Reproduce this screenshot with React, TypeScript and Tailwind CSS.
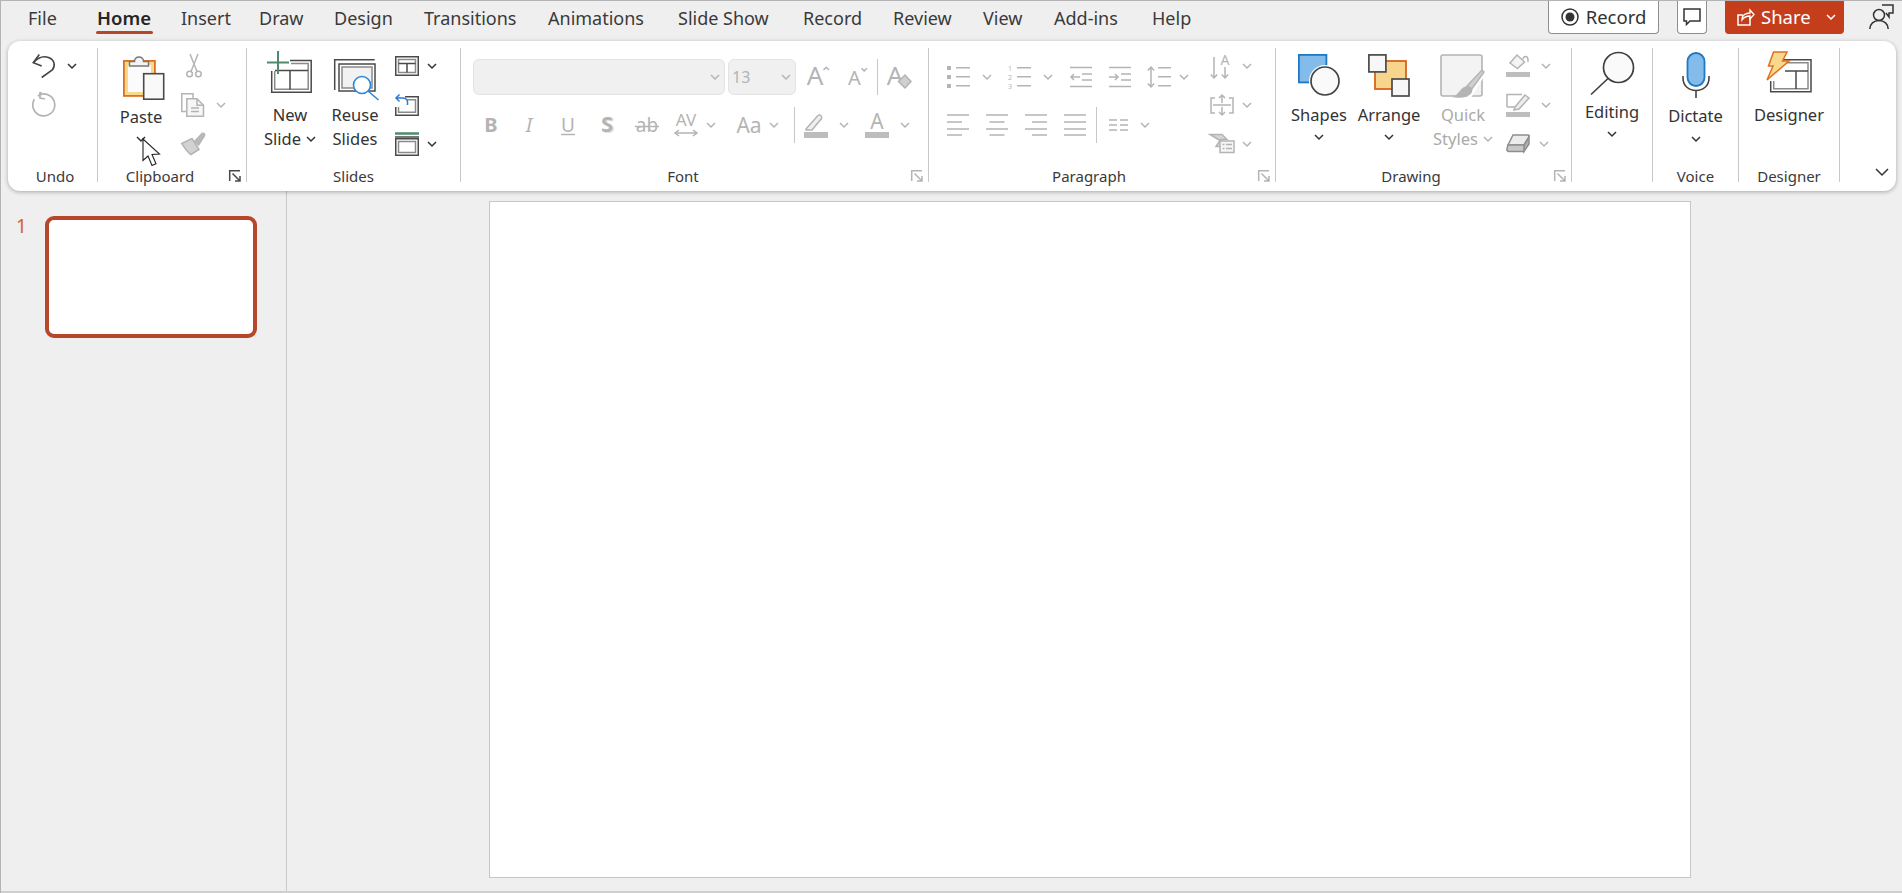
import type { ReactNode } from "react";

const D = "#4a4a4a";
const G = "#b4b4b4";
const FONT = "Noto Sans, sans-serif";

function Svg({ w, h, children, className }: { w: number; h: number; children: ReactNode; className?: string }) {
  return (
    <svg width={w} height={h} viewBox={`0 0 ${w} ${h}`} fill="none" strokeWidth={1.5} className={"shrink-0 overflow-visible " + (className ?? "")}>
      {children}
    </svg>
  );
}

function Chev({ off, light, className }: { off?: boolean; light?: boolean; className?: string }) {
  return (
    <Svg w={10} h={6} className={className}>
      <path d="M1 1l4 4 4-4" stroke={light ? "#fff" : off ? G : "#333"} />
    </Svg>
  );
}

function Launcher({ off, className }: { off?: boolean; className?: string }) {
  const c = off ? G : D;
  return (
    <Svg w={12} h={12} className={className}>
      <path d="M.7 11V.7H11" stroke={c} />
      <path d="M3.5 3.5l7.5 7.5M11 6v5H6" stroke={c} />
    </Svg>
  );
}

// ---- big icons
function PasteIcon() {
  return (
    <Svg w={42} h={46}>
      <rect x=".9" y="6.9" width="31" height="35" fill="#f8d98c" stroke="#e0701f" strokeWidth={1.8} />
      <rect x="5" y="11" width="23" height="27" fill="#fbfbfb" />
      <path d="M6.5 12V7.500h5c0-6 9-6 9 0h5V12z" fill="#f4f4f4" stroke="#777" />
      <rect x="20.700" y="19.700" width="20" height="25.500" fill="#f9f9f9" stroke={D} strokeWidth={1.6} />
    </Svg>
  );
}

function NewSlideIcon() {
  return (
    <Svg w={46} h={42}>
      <path d="M23 9.500h21.200v31.700H4.700V20" stroke={D} />
      <path d="M24 12.500h17.200v25.700H7.700V20" stroke="#8a8a8a" />
      <path d="M8 19.500h33M23 19.500v19" stroke={D} />
      <path d="M0 11.500h22M11 0v23" stroke="#4f8a6b" strokeWidth={2} />
    </Svg>
  );
}

function ReuseIcon() {
  return (
    <Svg w={46} h={41}>
      <path d="M.7 31V.7h40" stroke={D} />
      <rect x="5" y="5" width="36" height="27" stroke={D} />
      <rect x="8" y="8" width="30" height="21" fill="#f2f2f2" stroke="#8a8a8a" />
      <circle cx="28" cy="26" r="8.500" fill="#fff" stroke="#2b88d8" strokeWidth={1.6} />
      <path d="M34 32l10.500 9" stroke="#2b88d8" strokeWidth={1.6} />
    </Svg>
  );
}

function LayoutIcon() {
  return (
    <Svg w={24} h={20}>
      <rect x=".75" y=".75" width="22.500" height="18.500" stroke={D} />
      <rect x="3.500" y="3.500" width="17" height="13" stroke="#8a8a8a" />
      <path d="M3.500 7.500h17M12 7.500v9" stroke={D} />
    </Svg>
  );
}

function ResetIcon() {
  return (
    <Svg w={24} h={22}>
      <path d="M10 2.700h13.200v18.500H.75V13" stroke={D} />
      <path d="M12 5.700h8.500v12.500h-17V13" stroke="#8a8a8a" />
      <path d="M4.500 .5L1 4l3.500 3.500M1 4h7c4 0 5 3 4.500 7" stroke="#2b7cd3" />
    </Svg>
  );
}

function SectionIcon() {
  return (
    <Svg w={24} h={24}>
      <path d="M0 1.500h24" stroke="#4f8a6b" strokeWidth={2.5} />
      <path d="M0 5h24" stroke={D} />
      <rect x=".75" y="6.750" width="22.500" height="16.500" stroke={D} />
      <rect x="3.500" y="9.500" width="17" height="11" stroke="#8a8a8a" />
    </Svg>
  );
}

function ShapesIcon() {
  return (
    <Svg w={42} h={42}>
      <rect x=".9" y=".9" width="27.500" height="27.500" fill="#83bcea" stroke="#1f78c1" strokeWidth={1.8} />
      <circle cx="27" cy="27" r="16" fill="#fff" />
      <circle cx="27" cy="27" r="14" fill="#fafafa" stroke="#444" strokeWidth={1.7} />
    </Svg>
  );
}

function ArrangeIcon() {
  return (
    <Svg w={42} h={44}>
      <rect x="7" y="7" width="31" height="28" fill="#f7d58c" stroke="#d8641a" strokeWidth={1.8} />
      <rect x=".9" y=".9" width="17" height="17" fill="#f7f7f7" stroke={D} strokeWidth={1.7} />
      <rect x="24" y="25" width="17" height="17" fill="#f7f7f7" stroke={D} strokeWidth={1.7} />
    </Svg>
  );
}

function QuickStylesIcon() {
  return (
    <Svg w={46} h={46}>
      <rect x="1" y="1" width="41" height="41" rx="2" fill="#f3f3f3" stroke={G} strokeWidth={1.6} />
      <path d="M28 43L44 17" stroke="#fff" strokeWidth={6} />
      <path d="M27 32L42 16l2 2-13 18z" fill="#d0d0d0" stroke={G} />
      <path d="M12 43c7-1 8-11 16-11 4 0 5 4 4 6-2 5-12 7-20 5z" fill={G} />
    </Svg>
  );
}

function MagnifierIcon() {
  return (
    <Svg w={45} h={44}>
      <circle cx="28.500" cy="16.500" r="15" fill="#fafafa" stroke="#3f3f3f" strokeWidth={1.7} />
      <path d="M18 27.500L1 43.500" stroke="#3f3f3f" strokeWidth={1.7} />
    </Svg>
  );
}

function MicIcon() {
  return (
    <Svg w={28} h={46}>
      <rect x="5.500" y="1" width="17" height="33" rx="8.500" fill="#83bcea" stroke="#1f78c1" strokeWidth={1.8} />
      <path d="M1 24v2c0 8 6 12.500 13 12.500S27 34 27 26v-2M14 38.500V46" stroke="#444" strokeWidth={1.6} />
    </Svg>
  );
}

function DesignerIcon() {
  return (
    <Svg w={46} h={42}>
      <path d="M16 8.700h29v32H4.700V30" stroke={D} />
      <path d="M18 11.700h24v26H7.700V30" stroke="#8a8a8a" />
      <path d="M19 20h23M30 20v18" stroke={D} />
      <path d="M7.500 1h13.500l-4.500 9H23L1 29l6-14H2.500z" fill="#f8d98c" stroke="#e0701f" strokeWidth={1.5} />
    </Svg>
  );
}

// ---- clipboard small icons
function ScissorsIcon() {
  return (
    <Svg w={16} h={24}>
      <circle cx="3.600" cy="20" r="2.800" stroke={G} />
      <circle cx="12.400" cy="20" r="2.800" stroke={G} />
      <path d="M5 17.500L12 0M11 17.500L4 0" stroke={G} />
    </Svg>
  );
}

function CopyIcon() {
  return (
    <Svg w={24} h={24}>
      <path d="M5 18.500H.8V.8H12V5" stroke={G} />
      <path d="M5.800 5.800H16l6.500 6.500v11H5.800z" fill="#f6f6f6" stroke={G} />
      <path d="M16 6v6.300h6.500M10 15h8M10 18.500h8" stroke={G} />
    </Svg>
  );
}

function PainterIcon() {
  return (
    <Svg w={25} h={23}>
      <path d="M.8 11.500L11 6.500l7 11-8 5C6 20 3 15 .8 11.500z" fill="#d2d2d2" stroke={G} />
      <path d="M14 9l7-7.500c2-1 3.200 1 2.400 2.400L17.500 13z" fill="#bbb" stroke={G} />
    </Svg>
  );
}

function RedoIcon() {
  return (
    <Svg w={25} h={25}>
      <path d="M8 2.600a11 11 0 1 1-5.600 4.600" stroke={G} strokeWidth={1.7} />
      <path d="M9.500 .3L6 4.200M8 0v6l5 1" stroke={G} strokeWidth={1.7} />
    </Svg>
  );
}

function UndoIcon() {
  return (
    <Svg w={24} h={24}>
      <path d="M7.300 .6L1.300 8.700l8.400 3.300" stroke="#444" strokeWidth={1.6} />
      <path d="M1.300 8.700C6 3.500 12 2 16.500 3.500c6.500 2.500 7 8.500 3.800 12.500L9.700 23.500" stroke="#444" strokeWidth={1.6} />
    </Svg>
  );
}

// ---- font glyph icons use real text inside the svg
function GlyphIcon({ text, w = 24, h = 24, size = 20, weight, italic, under, strike, shadow, spacing, x = 12, y = 19 }: {
  text: string; w?: number; h?: number; size?: number; weight?: number; italic?: boolean; under?: boolean; strike?: boolean; shadow?: boolean; spacing?: number; x?: number; y?: number;
}) {
  return (
    <Svg w={w} h={h}>
      {shadow && (
        <text x={x + 1.5} y={y + 1} textAnchor="middle" fontSize={size} fontWeight={weight} fill="#e0e0e0" fontFamily={FONT}>
          {text}
        </text>
      )}
      <text x={x} y={y} textAnchor="middle" fontSize={size} fontWeight={weight} letterSpacing={spacing} fontStyle={italic ? "italic" : undefined} fill={G} fontFamily={FONT}>
        {text}
      </text>
      {under && <path d="M5 21.500h14" stroke={G} />}
      {strike && <path d="M0 13.500h24" stroke={G} />}
    </Svg>
  );
}

function GrowIcon() {
  return (
    <Svg w={24} h={22}>
      <text x="9" y="19" textAnchor="middle" fontSize={26} fill={G} fontFamily={FONT}>A</text>
      <path d="M17.500 4l2.700-2.700L23 4" stroke={G} />
    </Svg>
  );
}

function ShrinkIcon() {
  return (
    <Svg w={20} h={20}>
      <text x="6.500" y="18" textAnchor="middle" fontSize={20} fill={G} fontFamily={FONT}>A</text>
      <path d="M13.500 1.200l2.700 2.700 2.800-2.700" stroke={G} />
    </Svg>
  );
}

function ClearIcon() {
  return (
    <Svg w={24} h={24}>
      <text x="8" y="20" textAnchor="middle" fontSize={26} fill={G} fontFamily={FONT}>A</text>
      <path d="M11.500 16.500l6.500-6.500 6 6.500-6 6.500z" fill="#d0d0d0" stroke={G} />
    </Svg>
  );
}

function SpacingIcon() {
  return (
    <Svg w={24} h={26}>
      <text x="12" y="14" textAnchor="middle" fontSize={17} fill={G} fontFamily={FONT}>AV</text>
      <path d="M1 21h22M5 18l-4 3 4 3M19 18l4 3-4 3" stroke={G} />
    </Svg>
  );
}

function HighlightIcon() {
  return (
    <Svg w={24} h={26}>
      <path d="M2 17L14 3.500c2-1.500 4.500.5 3.500 3L8 18H2z" fill="#f0f0f0" stroke={G} />
      <path d="M0 20h24v6H0z" fill="#bdbdbd" />
    </Svg>
  );
}

function FontColorIcon() {
  return (
    <Svg w={24} h={26}>
      <text x="12" y="17" textAnchor="middle" fontSize={21} fill={G} fontFamily={FONT}>A</text>
      <path d="M0 20h24v6H0z" fill="#bdbdbd" />
    </Svg>
  );
}

function ListIcon({ numbered }: { numbered?: boolean }) {
  return (
    <Svg w={24} h={24}>
      {numbered ? (
        <g fill={G} fontSize={7} fontFamily={FONT}>
          <text x="0" y="6">1</text>
          <text x="0" y="15">2</text>
          <text x="0" y="24">3</text>
        </g>
      ) : (
        <path d="M0 1h4v4H0zM0 10h4v4H0zM0 19h4v4H0z" fill={G} />
      )}
      <path d="M9 2.800h14M9 11.800h14M9 20.800h14" stroke={G} />
    </Svg>
  );
}

function IndentIcon({ inc }: { inc?: boolean }) {
  return (
    <Svg w={22} h={22}>
      <path d="M0 1.500h22M0 20.500h22M12 8h10M12 14h10" stroke={G} />
      {inc ? <path d="M0 11h9M6 8l3 3-3 3" stroke={G} /> : <path d="M1 11h9M4 8l-3 3 3 3" stroke={G} />}
    </Svg>
  );
}

function LineSpaceIcon() {
  return (
    <Svg w={24} h={24}>
      <path d="M4 2v20M.8 5.500L4 2l3.200 3.500M.8 18.500L4 22l3.200-3.500" stroke={G} />
      <path d="M11 2.800h13M11 11.800h13M11 20.800h13" stroke={G} />
    </Svg>
  );
}

function AlignIcon({ kind }: { kind: "l" | "c" | "r" | "j" }) {
  const paths = {
    l: "M0 1h22M0 8h15M0 15h22M0 21h15",
    c: "M0 1h22M3.500 8h15M0 15h22M3.500 21h15",
    r: "M0 1h22M7 8h15M0 15h22M7 21h15",
    j: "M0 1h22M0 8h22M0 15h22M0 21h22",
  };
  return (
    <Svg w={22} h={22}>
      <path d={paths[kind]} stroke={G} />
    </Svg>
  );
}

function ColumnsIcon() {
  return (
    <Svg w={20} h={12}>
      <path d="M0 1h8M0 6h8M0 11h8M11 1h8M11 6h8M11 11h8" stroke={G} />
    </Svg>
  );
}

function TextDirIcon() {
  return (
    <Svg w={24} h={26}>
      <path d="M4 4v21M.8 21.500L4 25l3.200-3.500M15 14v11M11.800 21.500L15 25l3.200-3.500" stroke={G} />
      <text x="15" y="12" textAnchor="middle" fontSize={14} fill={G} fontFamily={FONT}>A</text>
    </Svg>
  );
}

function AlignTextIcon() {
  return (
    <Svg w={24} h={22}>
      <path d="M5 4H1v15h4M19 4h4v15h-4" stroke={G} />
      <path d="M12 1v8M9 4l3-3 3 3M12 13v8M9 18l3 3 3-3M3 11h18" stroke={G} />
    </Svg>
  );
}

function SmartArtIcon() {
  return (
    <Svg w={24} h={19}>
      <path d="M0 .5h12l5 5H11v7H6L10 6.500z" fill="#d5d5d5" stroke={G} />
      <rect x="10" y="7" width="14" height="11.500" fill="#f6f6f6" stroke={G} />
      <path d="M12.500 10.500h2M16 10.500h6M12.500 14.500h2M16 14.500h6" stroke={G} />
    </Svg>
  );
}

function FillIcon() {
  return (
    <Svg w={24} h={24}>
      <path d="M4 9l7-8 7.500 7-7 6.500z" fill="#f4f4f4" stroke={G} />
      <path d="M17 5c1-4 5-3 5 1v2" stroke={G} />
      <path d="M0 18h24v5H0z" fill="#bdbdbd" />
    </Svg>
  );
}

function OutlineIcon() {
  return (
    <Svg w={24} h={24}>
      <path d="M1 14V1.500h15M1 14h8" stroke={G} />
      <path d="M9 14L19 2l4 3-10 11-5 1z" fill="#eee" stroke={G} />
      <path d="M0 19h24v5H0z" fill="#bdbdbd" />
    </Svg>
  );
}

function EffectsIcon() {
  return (
    <Svg w={24} h={19}>
      <path d="M7 1h15c1 0 1.500 1 1 2l-5 8H2z" fill="#ececec" stroke="#8e8e8e" />
      <path d="M18 11l5-8v7l-5 7.500z" fill="#b0b0b0" stroke="#8e8e8e" />
      <path d="M2 11h16v6.500H3c-2 0-2.500-2-2-3z" fill="#c8c8c8" stroke="#8e8e8e" />
    </Svg>
  );
}

function Cursor() {
  return (
    <svg width="20" height="29" viewBox="0 0 20 29" fill="#fff" stroke="#222" strokeWidth="1.1" className="absolute left-[41px] top-[90px]">
      <path d="M1 1v21.500l5-4.500 4 9.500 4-1.800-4-9.200 7.500-.5z" />
    </svg>
  );
}

// ---- layout helpers
function Group({ width, children, label, labelClass, launcher, off }: {
  width: string; children: ReactNode; label?: string; labelClass?: string; launcher?: string; off?: boolean;
}) {
  return (
    <div className={`${width} h-[134px] shrink-0 border-r border-[#c8c8c8]`}>
      <div className="flex h-[120px]">{children}</div>
      <div className="flex h-4 items-center text-[15px] leading-4 text-[#3a3a3a]">
        {label && <span className={labelClass ?? "w-full text-center"}>{label}</span>}
        {launcher && <Launcher off={off} className={launcher} />}
      </div>
    </div>
  );
}

function SmallRow({ children, className }: { children: ReactNode; className?: string }) {
  return <div className={"flex h-[39px] items-center " + (className ?? "")}>{children}</div>;
}

function SmallCol({ children, className }: { children: ReactNode; className?: string }) {
  return <div className={"-mt-[2px] " + (className ?? "")}>{children}</div>;
}

function BigBtn({ icon, top, lines, off, chevTop, w, chevInline }: {
  icon: ReactNode; top: string; lines: string[]; off?: boolean; chevTop?: string; w: string; chevInline?: boolean;
}) {
  return (
    <div className={`${w} relative flex shrink-0 flex-col items-center text-[16.5px] leading-6 ${off ? "text-[#aaaaaa]" : "text-[#333]"}`}>
      <div className={top}>{icon}</div>
      {lines.map((l, i) => (
        <span key={l} className="flex items-center gap-[5px] whitespace-nowrap">
          {l}
          {chevInline && i === lines.length - 1 && <Chev off={off} />}
        </span>
      ))}
      {chevTop && <Chev className={chevTop} />}
    </div>
  );
}

const tabs = [
  { name: "File", w: "w-[69px]" },
  { name: "Home", w: "w-[84px]" },
  { name: "Insert", w: "w-[78px]" },
  { name: "Draw", w: "w-[75px]" },
  { name: "Design", w: "w-[90px]" },
  { name: "Transitions", w: "w-[124px]" },
  { name: "Animations", w: "w-[130px]" },
  { name: "Slide Show", w: "w-[125px]" },
  { name: "Record", w: "w-[90px]" },
  { name: "Review", w: "w-[90px]" },
  { name: "View", w: "w-[71px]" },
  { name: "Add-ins", w: "w-[98px]" },
  { name: "Help", w: "w-[40px]" },
];

export default function App() {
  return (
    <div className="flex h-[893px] w-[1902px] flex-col overflow-hidden border-l border-t border-[#b4b4b4] bg-[#efefef] [font-family:'Noto_Sans',sans-serif]">
      {/* tab strip */}
      <div className="flex h-[40px] shrink-0 pl-[27px] pr-[8px]">
        <div className="flex h-[34px] items-center text-[18px] text-[#3a3a3a]">
          {tabs.map((t) => (
            <div key={t.name} className={`${t.w} relative shrink-0 whitespace-nowrap`}>
              {t.name === "Home" ? (
                <span className="text-[18.5px] font-semibold text-[#262626]">
                  Home
                  <span className="absolute left-[-1px] top-[27px] h-[3px] w-[57px] rounded-sm bg-[#b7472a]" />
                </span>
              ) : (
                t.name
              )}
            </div>
          ))}
        </div>
        <div className="ml-auto flex items-start">
          <div className="-mt-px flex h-[34px] w-[111px] items-center justify-center gap-[7px] rounded-b-[4px] border border-t-0 border-[#8f8f8f] bg-white text-[18.5px] text-[#333]">
            <Svg w={18} h={18}>
              <circle cx="9" cy="9" r="8" stroke="#333" />
              <circle cx="9" cy="9" r="4.500" fill="#333" />
            </Svg>
            Record
          </div>
          <div className="-mt-px ml-[18px] flex h-[34px] w-[30px] items-center justify-center rounded-b-[4px] border border-t-0 border-[#8f8f8f] bg-white">
            <Svg w={18} h={18}>
              <path d="M1 1h16v12H7l-3.500 3.500V13H1z" stroke="#333" />
            </Svg>
          </div>
          <div className="-mt-px ml-[18px] flex h-[34px] w-[119px] items-center rounded-b-[4px] bg-[#c43e1c] pl-[12px] text-[18.5px] text-white">
            <Svg w={17} h={18}>
              <path d="M13 9v8H1V7h5" stroke="#fff" />
              <path d="M5 12c0-5 4-7 8-7V2l4 4.500-4 4.500V8c-4 0-6 1-8 4z" stroke="#fff" strokeWidth={1.3} />
            </Svg>
            <span className="ml-[7px]">Share</span>
            <Chev light className="ml-[15px]" />
          </div>
          <div className="ml-[25px] mt-[3px]">
            <Svg w={25} h={25}>
              <circle cx="10" cy="11" r="5.500" stroke="#333" />
              <path d="M.8 25c0-5 4-8.500 9.200-8.500s9.200 3.500 9.200 8.500" stroke="#333" />
              <path d="M13 1h11v8h-4v4l-3-4" stroke="#333" />
            </Svg>
          </div>
        </div>
      </div>

      {/* ribbon */}
      <div className="z-10 ml-[7px] flex h-[150px] w-[1888px] shrink-0 rounded-[12px] bg-white pt-[7px] shadow-[0_1px_4px_rgba(0,0,0,0.3)]">
        <Group width="w-[90px]" label="Undo" labelClass="w-full pl-[5px] text-center">
          <SmallCol className="pl-[24px]">
            <SmallRow>
              <UndoIcon />
              <Chev className="ml-[11px]" />
            </SmallRow>
            <SmallRow>
              <RedoIcon />
            </SmallRow>
          </SmallCol>
        </Group>

        <Group width="w-[149px]" label="Clipboard" labelClass="w-[124px] text-center" launcher="ml-[7px]">
          <div className="relative ml-[3px] w-[80px]">
            <BigBtn w="w-[80px]" top="mb-[4px] ml-[6px] mt-[6px] h-[47px]" icon={<PasteIcon />} lines={["Paste"]} chevTop="mt-[7px]" />
            <Cursor />
          </div>
          <SmallCol>
            <SmallRow className="pl-[5px]">
              <ScissorsIcon />
            </SmallRow>
            <SmallRow>
              <CopyIcon />
              <Chev off className="ml-[11px]" />
            </SmallRow>
            <SmallRow>
              <PainterIcon />
            </SmallRow>
          </SmallCol>
        </Group>

        <Group width="w-[214px]" label="Slides">
          <BigBtn w="ml-[15px] w-[56px]" top="mt-[3px] h-[52px]" icon={<NewSlideIcon />} lines={["New", "Slide"]} chevInline />
          <BigBtn w="w-[74px]" top="ml-[3px] mt-[11px] h-[44px]" icon={<ReuseIcon />} lines={["Reuse", "Slides"]} />
          <SmallCol className="ml-[3px]">
            <SmallRow>
              <LayoutIcon />
              <Chev className="ml-[8px]" />
            </SmallRow>
            <SmallRow>
              <ResetIcon />
            </SmallRow>
            <SmallRow>
              <SectionIcon />
              <Chev className="ml-[8px]" />
            </SmallRow>
          </SmallCol>
        </Group>

        <Group width="w-[468px]" label="Font" labelClass="w-[444px] text-center" launcher="ml-[6px]" off>
          <div className="pl-[12px] pt-[11px]">
            <div className="flex h-[36px] items-center">
              <div className="flex h-[36px] w-[252px] items-center justify-end rounded-[6px] border border-[#e3e3e3] bg-[#f0f0f0] pr-[4px]">
                <Chev off />
              </div>
              <div className="ml-[3px] flex h-[36px] w-[68px] items-center justify-between rounded-[6px] border border-[#e3e3e3] bg-[#f0f0f0] pl-[3px] pr-[4px] text-[16px] text-[#b4b4b4]">
                13
                <Chev off />
              </div>
              <div className="ml-[10px]">
                <GrowIcon />
              </div>
              <div className="ml-[18px]">
                <ShrinkIcon />
              </div>
              <div className="ml-[9px] h-[36px] w-px bg-[#c8c8c8]" />
              <div className="ml-[9px]">
                <ClearIcon />
              </div>
            </div>
            <div className="mt-[12px] flex h-[36px] items-center pl-[6px]">
              <GlyphIcon text="B" weight={700} />
              <div className="ml-[14px]">
                <GlyphIcon text="I" italic />
              </div>
              <div className="ml-[15px]">
                <GlyphIcon text="U" under size={19} />
              </div>
              <div className="ml-[15px]">
                <GlyphIcon text="S" weight={700} size={22} shadow />
              </div>
              <div className="ml-[16px]">
                <GlyphIcon text="ab" strike size={19} />
              </div>
              <div className="ml-[15px]">
                <SpacingIcon />
              </div>
              <Chev off className="ml-[8px]" />
              <div className="ml-[21px]">
                <GlyphIcon text="Aa" size={21} y={20} />
              </div>
              <Chev off className="ml-[8px]" />
              <div className="ml-[15px] h-[36px] w-px bg-[#c8c8c8]" />
              <div className="ml-[9px]">
                <HighlightIcon />
              </div>
              <Chev off className="ml-[11px]" />
              <div className="ml-[16px]">
                <FontColorIcon />
              </div>
              <Chev off className="ml-[11px]" />
            </div>
          </div>
        </Group>

        <Group width="w-[347px]" label="Paragraph" labelClass="w-[320px] text-center" launcher="ml-[9px]" off>
          <div className="w-[276px] shrink-0 pl-[18px] pt-[11px]">
            <div className="flex h-[36px] items-center">
              <ListIcon />
              <Chev off className="ml-[11px]" />
              <div className="ml-[16px]">
                <ListIcon numbered />
              </div>
              <Chev off className="ml-[11px]" />
              <div className="ml-[17px]">
                <IndentIcon />
              </div>
              <div className="ml-[17px]">
                <IndentIcon inc />
              </div>
              <div className="ml-[16px]">
                <LineSpaceIcon />
              </div>
              <Chev off className="ml-[8px]" />
            </div>
            <div className="mt-[12px] flex h-[36px] items-center">
              <AlignIcon kind="l" />
              <div className="ml-[17px]">
                <AlignIcon kind="c" />
              </div>
              <div className="ml-[17px]">
                <AlignIcon kind="r" />
              </div>
              <div className="ml-[17px]">
                <AlignIcon kind="j" />
              </div>
              <div className="ml-[10px] h-[36px] w-px bg-[#c8c8c8]" />
              <div className="ml-[12px]">
                <ColumnsIcon />
              </div>
              <Chev off className="ml-[11px]" />
            </div>
          </div>
          <SmallCol className="pl-[5px]">
            <SmallRow>
              <TextDirIcon />
              <Chev off className="ml-[8px]" />
            </SmallRow>
            <SmallRow>
              <AlignTextIcon />
              <Chev off className="ml-[8px]" />
            </SmallRow>
            <SmallRow>
              <SmartArtIcon />
              <Chev off className="ml-[8px]" />
            </SmallRow>
          </SmallCol>
        </Group>

        <Group width="w-[296px]" label="Drawing" labelClass="w-[270px] text-center" launcher="ml-[8px]" off>
          <BigBtn w="ml-[8px] w-[70px]" top="mt-[6px] h-[49px]" icon={<ShapesIcon />} lines={["Shapes"]} chevTop="mt-[7px]" />
          <BigBtn w="w-[70px]" top="mt-[6px] h-[49px]" icon={<ArrangeIcon />} lines={["Arrange"]} chevTop="mt-[7px]" />
          <BigBtn w="w-[78px]" top="mt-[6px] h-[49px]" off icon={<QuickStylesIcon />} lines={["Quick", "Styles"]} chevInline />
          <SmallCol className="ml-[4px]">
            <SmallRow>
              <FillIcon />
              <Chev off className="ml-[11px]" />
            </SmallRow>
            <SmallRow>
              <OutlineIcon />
              <Chev off className="ml-[11px]" />
            </SmallRow>
            <SmallRow>
              <EffectsIcon />
              <Chev off className="ml-[9px]" />
            </SmallRow>
          </SmallCol>
        </Group>

        <Group width="w-[81px]">
          <BigBtn w="w-full" top="mt-[3px] h-[49px]" icon={<MagnifierIcon />} lines={["Editing"]} chevTop="mt-[7px]" />
        </Group>

        <Group width="w-[86px]" label="Voice">
          <BigBtn w="w-full" top="mt-[4px] h-[52px]" icon={<MicIcon />} lines={["Dictate"]} chevTop="mt-[8px]" />
        </Group>

        <Group width="w-[101px]" label="Designer">
          <BigBtn w="w-full" top="mt-[3px] h-[52px]" icon={<DesignerIcon />} lines={["Designer"]} />
        </Group>

        <div className="flex flex-1 justify-end pr-[7px] pt-[120px]">
          <Svg w={14} h={8}>
            <path d="M1 1l6 6 6-6" stroke="#333" />
          </Svg>
        </div>
      </div>

      {/* work area */}
      <div className="flex min-h-0 flex-1 border-b-2 border-[#cfcfcf]">
        <aside className="flex w-[286px] shrink-0 border-r border-[#c8c8c8] pl-[15px] pt-[19px]">
          <span className="w-[29px] text-[19px] leading-8 text-[#d4641f]">1</span>
          <div className="mt-[6px] h-[122px] w-[212px] rounded-[9px] border-[4px] border-[#b7472a] bg-white" />
        </aside>
        <main className="flex-1 pl-[202px] pt-[10px]">
          <div className="h-[677px] w-[1202px] border border-[#c6c6c6] bg-white" />
        </main>
      </div>
    </div>
  );
}
